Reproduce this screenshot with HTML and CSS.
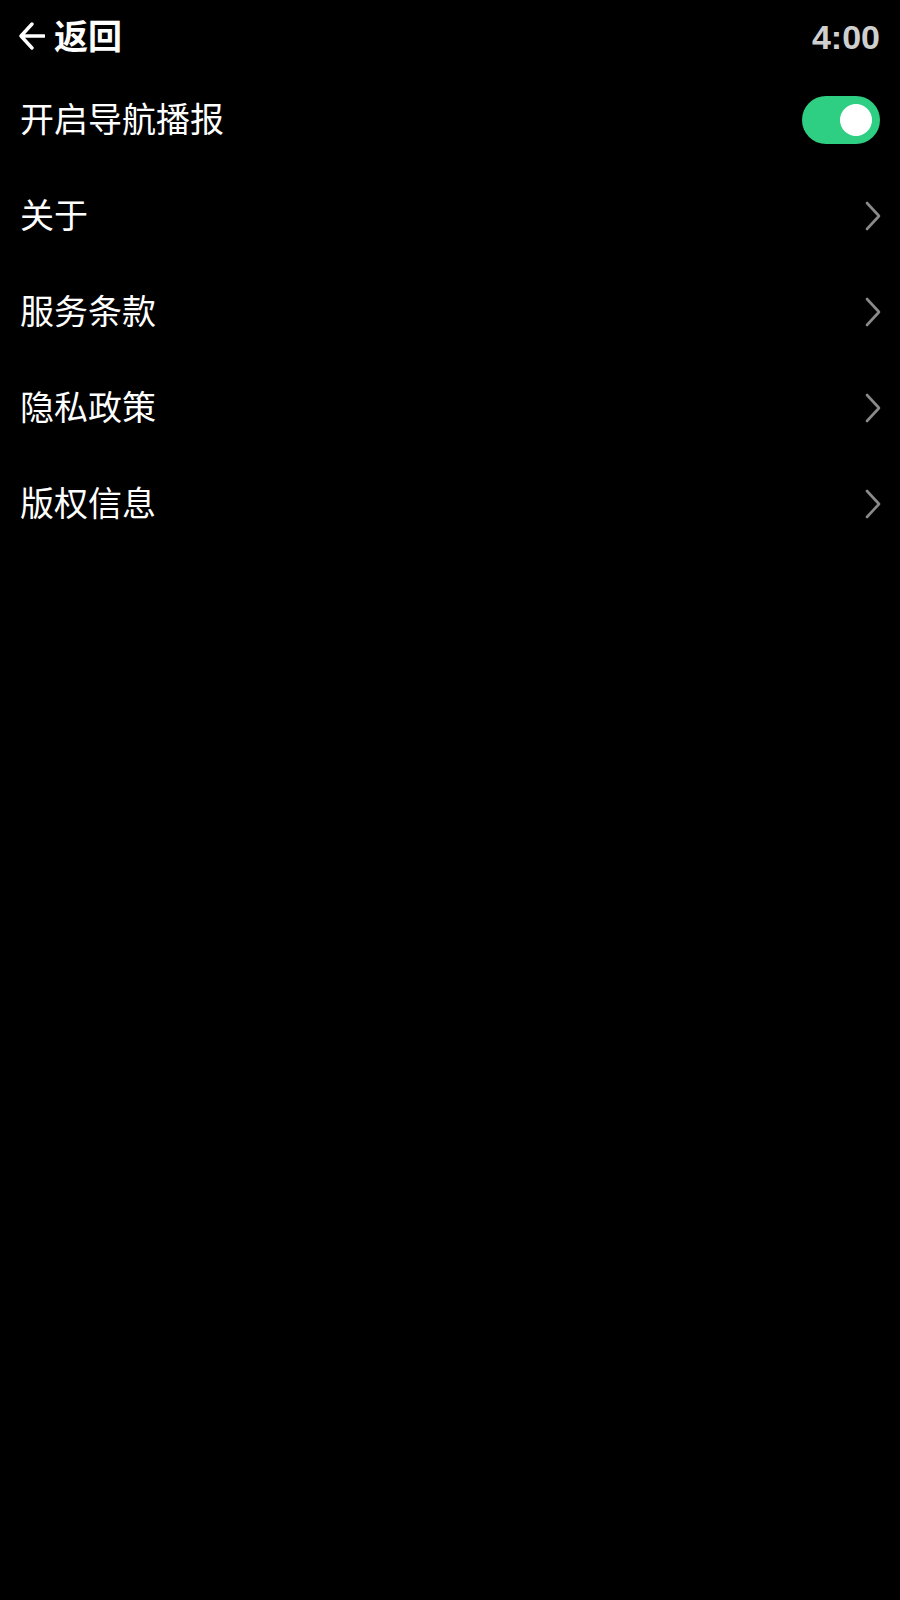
FILE: index.html
```html
<!DOCTYPE html>
<html lang="zh-CN">
<head>
<meta charset="utf-8">
<title>设置</title>
<link rel="stylesheet" href="styles.css">
</head>
<body>
<div class="page">
  <header class="header">
    <div class="back">
      <svg class="back-icon" width="26" height="28" viewBox="0 0 26 28" aria-hidden="true">
        <path d="M13 2 L2 14 L13 26 M2 14 H25" fill="none" stroke="#fff" stroke-width="3.4" stroke-linecap="round" stroke-linejoin="round"/>
      </svg>
      <span class="back-text">返回</span>
    </div>
    <div class="time">4:00</div>
  </header>
  <ul class="list">
    <li class="row">
      <span class="label">开启导航播报</span>
      <span class="toggle"><span class="knob"></span></span>
    </li>
    <li class="row">
      <span class="label">关于</span>
      <svg class="chev" width="16" height="30" viewBox="0 0 16 30" aria-hidden="true"><path d="M2 2 L14 15 L2 28" fill="none" stroke="#8a8a8a" stroke-width="2.6" stroke-linecap="round" stroke-linejoin="round"/></svg>
    </li>
    <li class="row">
      <span class="label">服务条款</span>
      <svg class="chev" width="16" height="30" viewBox="0 0 16 30" aria-hidden="true"><path d="M2 2 L14 15 L2 28" fill="none" stroke="#8a8a8a" stroke-width="2.6" stroke-linecap="round" stroke-linejoin="round"/></svg>
    </li>
    <li class="row">
      <span class="label">隐私政策</span>
      <svg class="chev" width="16" height="30" viewBox="0 0 16 30" aria-hidden="true"><path d="M2 2 L14 15 L2 28" fill="none" stroke="#8a8a8a" stroke-width="2.6" stroke-linecap="round" stroke-linejoin="round"/></svg>
    </li>
    <li class="row">
      <span class="label">版权信息</span>
      <svg class="chev" width="16" height="30" viewBox="0 0 16 30" aria-hidden="true"><path d="M2 2 L14 15 L2 28" fill="none" stroke="#8a8a8a" stroke-width="2.6" stroke-linecap="round" stroke-linejoin="round"/></svg>
    </li>
  </ul>
</div>
</body>
</html>
```
FILE: styles.css
```css
html, body {
  margin: 0;
  padding: 0;
  background: #000;
}
body {
  width: 900px;
  min-height: 1600px;
  color: #fff;
  font-family: "Noto Sans CJK SC", "Noto Sans", sans-serif;
}
.page {
  padding: 0 20px 0 20px;
}
.header {
  height: 72px;
  display: flex;
  align-items: center;
  justify-content: space-between;
}
.back {
  display: flex;
  align-items: center;
  gap: 9px;
}
.back-icon {
  display: block;
  margin-left: -1px;
}
.back-text {
  font-size: 34px;
  font-weight: 700;
  line-height: 1;
  padding-bottom: 2px;
}
.time {
  font-family: "Liberation Sans", Arial, sans-serif;
  font-size: 34px;
  font-weight: 700;
  color: #cfcfcf;
  line-height: 1;
  margin-top: 2px;
}
.list {
  list-style: none;
  margin: 0;
  padding: 0;
}
.row {
  height: 96px;
  display: flex;
  align-items: center;
  justify-content: space-between;
}
.label {
  font-size: 34px;
  line-height: 1;
  padding-bottom: 4px;
}
.toggle {
  width: 78px;
  height: 48px;
  border-radius: 24px;
  background: #2ecf82;
  display: flex;
  align-items: center;
  justify-content: flex-end;
  padding-right: 8px;
  box-sizing: border-box;
}
.knob {
  width: 32px;
  height: 32px;
  border-radius: 50%;
  background: #fff;
}
.chev {
  display: block;
  margin-right: -1px;
}
```
